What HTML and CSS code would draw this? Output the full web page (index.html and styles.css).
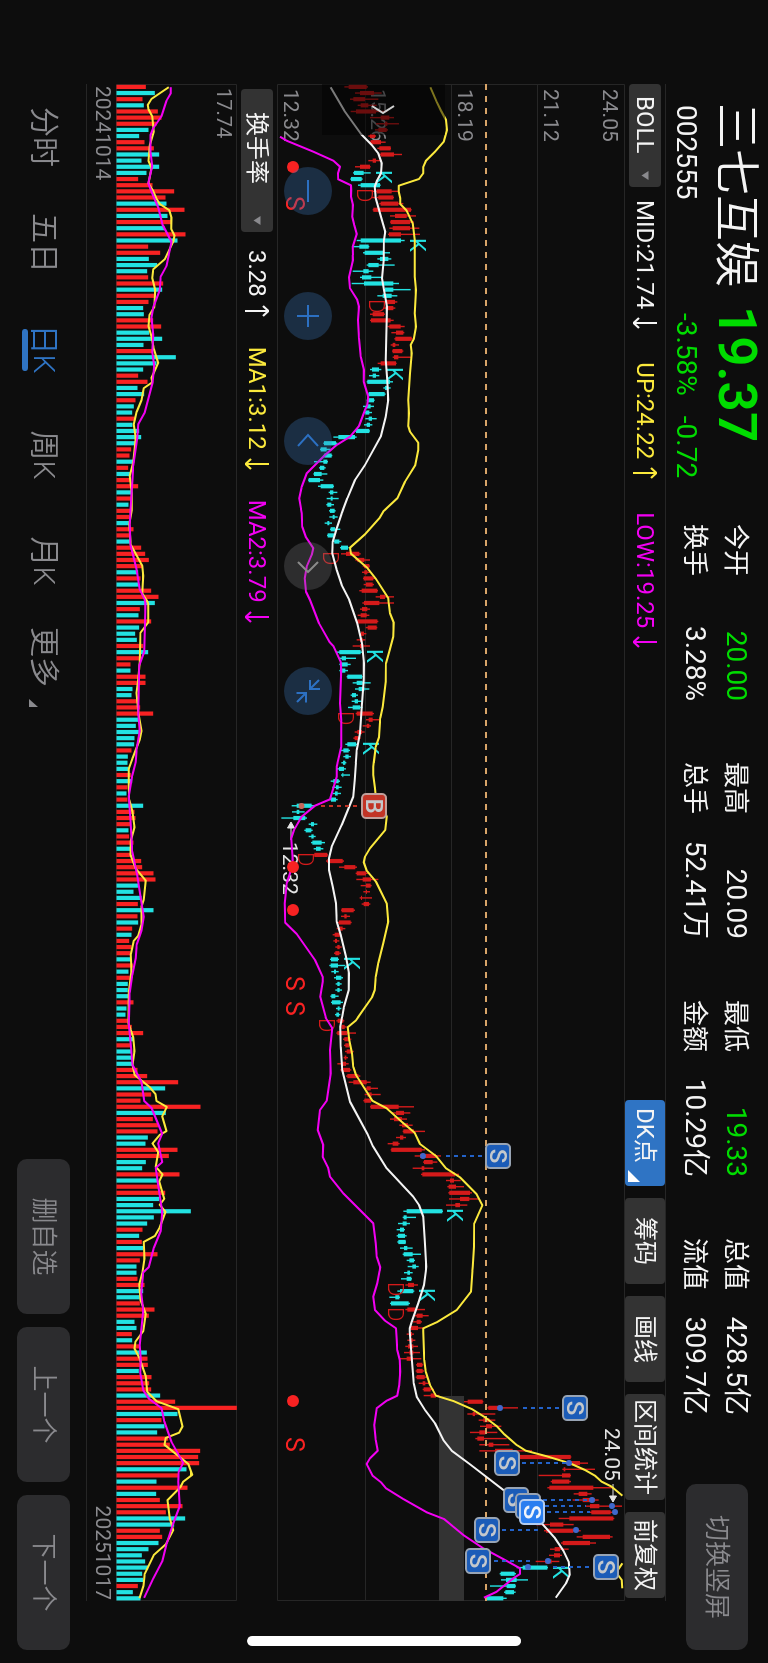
FILE: index.html
```html
<!DOCTYPE html>
<html lang="zh-CN">
<head>
<meta charset="utf-8">
<title>三七互娱 002555</title>
<link rel="stylesheet" href="styles.css">
</head>
<body>
<main class="screen">
  <header class="header">
    <div class="quote">
      <h1 class="name">三七互娱</h1>
      <strong class="price">19.37</strong>
      <span class="code">002555</span>
      <span class="change"><span>-3.58%</span><span>-0.72</span></span>
    </div>
    <dl class="stats">
      <div class="stat"><dt>今开</dt><dd class="down">20.00</dd></div>
      <div class="stat"><dt>最高</dt><dd>20.09</dd></div>
      <div class="stat"><dt>最低</dt><dd class="down">19.33</dd></div>
      <div class="stat"><dt>总值</dt><dd>428.5亿</dd></div>
      <div class="stat"><dt>换手</dt><dd>3.28%</dd></div>
      <div class="stat"><dt>总手</dt><dd>52.41万</dd></div>
      <div class="stat"><dt>金额</dt><dd>10.29亿</dd></div>
      <div class="stat"><dt>流值</dt><dd>309.7亿</dd></div>
    </dl>
    <button class="pill rotate" type="button">切换竖屏</button>
  </header>

  <section class="bar bar-main">
    <span class="picker">
      <select class="select" aria-label="主图指标"><option>BOLL</option></select>
      <svg class="caret" viewBox="0 0 10 8"><path d="M0 0h10L5 8z"/></svg>
    </span>
    <span class="reading">MID:21.74<svg class="arrow" viewBox="0 0 12 24"><path d="M6 0v23M1 18l5 5.500 5-5.500"/></svg></span>
    <span class="reading up">UP:24.22<svg class="arrow" viewBox="0 0 12 24"><path d="M6 24V1M1 6l5-5.500L11 6"/></svg></span>
    <span class="reading low">LOW:19.25<svg class="arrow" viewBox="0 0 12 24"><path d="M6 0v23M1 18l5 5.500 5-5.500"/></svg></span>
    <nav class="tools">
      <button class="tool tool-on" type="button">DK点<svg class="corner" viewBox="0 0 12 12"><path d="M12 0v12H0z"/></svg></button>
      <button class="tool" type="button">筹码</button>
      <button class="tool" type="button">画线</button>
      <button class="tool" type="button">区间统计</button>
      <button class="tool" type="button">前复权</button>
    </nav>
  </section>

  <section class="plot">
    <svg class="chart" id="price-chart" viewBox="0 0 1517 348" role="img" aria-label="日K线"></svg>
    <button class="drawer" type="button" aria-label="展开"><svg viewBox="0 0 12 26"><path d="M2 2l7 11-7 11"/></svg></button>
    <div class="knobs">
      <button class="knob" type="button" aria-label="缩小"><svg viewBox="0 0 48 48"><path d="M13 24h22"/></svg></button>
      <button class="knob" type="button" aria-label="放大"><svg viewBox="0 0 48 48"><path d="M13 24h22M24 13v22"/></svg></button>
      <button class="knob" type="button" aria-label="向左"><svg viewBox="0 0 48 48"><path d="M29 14L18 24l11 10"/></svg></button>
      <button class="knob knob-off" type="button" aria-label="向右"><svg viewBox="0 0 48 48"><path d="M20 14l10 10-10 10"/></svg></button>
      <button class="knob" type="button" aria-label="收起"><svg viewBox="0 0 48 48"><path d="M22 12v10H13M22 22l-9-9M26 35.500V26h9.500M26 26l9 9"/></svg></button>
    </div>
  </section>

  <section class="bar bar-volume">
    <span class="picker picker-wide">
      <select class="select" aria-label="副图指标"><option>换手率</option></select>
      <svg class="caret" viewBox="0 0 10 8"><path d="M0 0h10L5 8z"/></svg>
    </span>
    <span class="reading">3.28<svg class="arrow" viewBox="0 0 12 24"><path d="M6 24V1M1 6l5-5.500L11 6"/></svg></span>
    <span class="reading up">MA1:3.12<svg class="arrow" viewBox="0 0 12 24"><path d="M6 0v23M1 18l5 5.500 5-5.500"/></svg></span>
    <span class="reading low">MA2:3.79<svg class="arrow" viewBox="0 0 12 24"><path d="M6 0v23M1 18l5 5.500 5-5.500"/></svg></span>
  </section>

  <section class="plot">
    <svg class="chart" id="volume-chart" viewBox="0 0 1517 121" role="img" aria-label="换手率"></svg>
  </section>
  <div class="dates"><time>20241014</time><time>20251017</time></div>

  <footer class="footer">
    <nav class="tabs">
      <button class="tab" type="button">分时</button>
      <button class="tab" type="button">五日</button>
      <button class="tab tab-on" type="button">日K</button>
      <button class="tab" type="button">周K</button>
      <button class="tab" type="button">月K</button>
      <button class="tab" type="button">更多<svg class="more" viewBox="0 0 8 9"><path d="M8 0v9H0z"/></svg></button>
    </nav>
    <div class="actions">
      <button class="pill" type="button">删自选</button>
      <button class="pill" type="button">上一个</button>
      <button class="pill" type="button">下一个</button>
    </div>
  </footer>
  <div class="home"></div>
</main>
<script src="charts.js"></script>
</body>
</html>
```
FILE: styles.css
```css
* { box-sizing: border-box; }

body {
  margin: 0;
  height: 100vh;
  overflow: hidden;
  background: #0d0d0d;
  color: #f4f4f4;
  font-family: Roboto, "Noto Sans CJK SC", sans-serif;
}

/* The terminal is a landscape screen turned clockwise. */
.screen {
  position: fixed;
  top: 0;
  left: 0;
  width: 100vh;
  height: 100vw;
  overflow: hidden;
  display: flex;
  flex-direction: column;
  transform-origin: 0 0;
  transform: translateX(100vw) rotate(90deg);
}

button, select { font: inherit; color: inherit; border: 0; margin: 0; padding: 0; background: none; }
svg { display: block; }

.header { display: flex; height: 102px; padding: 0 13px 0 103px; }
.quote {
  display: grid;
  grid-template-columns: 203px 218px;
  grid-template-rows: 62px 40px;
  align-items: center;
  line-height: 1;
}
.name { margin: 0; font-size: 46px; font-weight: 350; }
.price { font-size: 53px; font-weight: 600; color: #00dc00; }
.code { font-size: 28px; padding-left: 2px; }
.change { display: flex; gap: 20px; font-size: 28px; color: #00dc00; padding-left: 7px; }
.stats {
  flex: 1;
  display: grid;
  grid-template-columns: repeat(4, 1fr);
  grid-auto-rows: 41px;
  column-gap: 61px;
  margin: 11px 69px 0 0;
  font-size: 26px;
}
.stat { display: flex; justify-content: space-between; align-items: center; line-height: 1; }
.stat dd { margin: 0; font-size: 28px; }
.down { color: #00dc00; }

.pill {
  height: 53px;
  width: 155px;
  border-radius: 10px;
  background: #2c2c2e;
  color: #8a8a8e;
  font-size: 26px;
  font-weight: 350;
  line-height: 1;
}
.rotate { width: 166px; height: 62px; margin-top: 20px; }

.bar {
  display: flex;
  align-items: center;
  gap: 33px;
  margin: 0 62px 0 84px;
  font-size: 24px;
  line-height: 1;
}
.bar-main { height: 41px; border-top: 1px solid #262626; }
.bar-volume { height: 40px; gap: 30px; }
.picker {
  display: grid;
  align-items: center;
  width: 103px;
  height: 32px;
  margin-right: -20px;
  border-radius: 4px;
  background: #333;
}
.select {
  grid-area: 1 / 1;
  appearance: none;
  width: 100%;
  height: 100%;
  padding-left: 12px;
}
.caret { grid-area: 1 / 1; justify-self: end; width: 9px; height: 8px; margin-right: 7px; fill: #8a8a8e; }
.picker-wide { width: 143px; margin-left: 5px; margin-right: -12px; }
.picker-wide .select { padding-left: 23px; }
.reading { display: flex; align-items: center; gap: 8px; }
.arrow { width: 12px; height: 24px; fill: none; stroke: currentColor; stroke-width: 2; }
.up { color: #fbe93c; }
.low { color: #f200f2; }
.tools { display: flex; gap: 12px; align-self: stretch; margin-left: auto; margin-right: 3px; }
.tool { position: relative; min-width: 86px; padding: 0 5px; border-radius: 4px; background: #333; }
.tool-on { padding-right: 20px; background: #2f74c4; }
.corner { position: absolute; right: 4px; bottom: 3px; width: 12px; height: 12px; fill: #fff; }

.plot { position: relative; margin: 0 62px 0 84px; }
.chart { width: 100%; height: auto; }
.drawer {
  position: absolute;
  left: 0;
  top: 180px;
  width: 51px;
  height: 123px;
  display: grid;
  place-items: center;
  background: rgba(0, 0, 0, .5);
}
.drawer svg { width: 12px; height: 26px; fill: none; stroke: #d0d0d0; stroke-width: 2; }
.knobs { position: absolute; left: 83px; bottom: 7px; display: flex; gap: 77px; }
.knob { width: 48px; height: 48px; border-radius: 50%; background: rgba(56, 120, 190, .3); color: #2c70c2; }
.knob svg { fill: none; stroke: currentColor; stroke-width: 2; }
.knob-off { background: rgba(115, 115, 120, .3); color: #8a8a8a; }

.dates {
  display: flex;
  justify-content: space-between;
  height: 30px;
  margin: 0 62px 0 84px;
  padding: 0 1px 0 2px;
  border-bottom: 1px solid #262626;
  font-size: 21px;
  line-height: 27px;
  color: #8a8a8e;
}

.footer {
  flex: 1;
  display: flex;
  align-items: center;
  justify-content: space-between;
  padding: 0 13px 2px 84px;
}
.tabs { display: grid; grid-template-columns: repeat(6, 106px); }
.tab {
  position: relative;
  display: flex;
  justify-content: center;
  align-items: end;
  gap: 12px;
  font-size: 30px;
  font-weight: 350;
  line-height: 36px;
  color: #8a8a8e;
}
.tab-on { color: #2f74c4; }
.tab-on::after {
  content: "";
  position: absolute;
  left: 33px;
  bottom: -4px;
  width: 42px;
  height: 6px;
  border-radius: 3px;
  background: #2f74c4;
}
.more { width: 8px; height: 9px; margin-bottom: 3px; fill: #8a8a8e; }
.actions { display: flex; gap: 13px; }

.home {
  position: absolute;
  right: 17px;
  top: 247px;
  width: 10px;
  height: 274px;
  border-radius: 5px;
  background: #fff;
}

.grid { stroke: #262626; fill: none; }
.axis { fill: #8a8a8e; font-size: 21px; }
.axis-small { font-size: 20px; }
.zone { fill: #333; }
.rise { fill: #d41a1a; }
.fall { fill: #22e2e2; }
.vol-rise { fill: #f82222; }
.vol-fall { fill: #22e2e2; }
.line { fill: none; stroke-width: 2; stroke-linejoin: round; }
.line-mid { stroke: #f4f4f4; }
.line-up { stroke: #fbe93c; }
.line-low { stroke: #f200f2; }
.last { stroke: #d8a468; stroke-width: 2; stroke-dasharray: 6 6; }
.mark { font-size: 22px; font-weight: 350; }
.mark-k { font-weight: 400; }
.signal { fill: #f82222; font-size: 25px; }
.note { fill: #e4e4e4; font-size: 21px; }
.note-arrow { stroke: #e4e4e4; fill: #e4e4e4; stroke-width: 1; }
.stem { stroke-width: 2; stroke-dasharray: 4 4; }
.badge text { font-size: 24px; font-weight: 500; text-anchor: middle; fill: #c4c8cc; }
.badge rect { stroke-width: 2; }
.badge-s rect { fill: #1b5cb8; stroke: #98a4b4; }
.badge-top rect { fill: #2a7ef0; stroke: #b4cdf0; }
.badge-top text { fill: #f0f4fa; }
.badge-b rect { fill: #c23426; stroke: #c0a09c; }
.stem-s { stroke: #2362c8; }
.stem-b { stroke: #c23426; }
.dot-s { fill: #3f68cc; }
.dot-b { fill: #c8685c; }
```
FILE: charts.js
```js
const NS = 'http://www.w3.org/2000/svg';
const STEP = 6.144;
const FIRST = 2.9;
const LEFT = 84;

function add(parent, tag, attrs, text) {
  const el = document.createElementNS(NS, tag);
  for (const key in attrs) el.setAttribute(key, attrs[key]);
  if (text) el.textContent = text;
  parent.appendChild(el);
  return el;
}

// Splits "a,b a,b" into pairs of numbers.
const rows = s => s.trim().split(/\s+/).map(r => r.split(','));

// Joins line segments: [start, units per pixel, level shift, points].
function trace(parent, cls, segments, toY) {
  let last = -1, d = '';
  for (const [start, unit, shift, pts] of segments) {
    for (const [v, t] of rows(pts)) {
      const x = start + t / unit - LEFT;
      if (x <= last) continue;
      last = x;
      d += (d ? 'L' : 'M') + x.toFixed(1) + ' ' + toY(+v + shift).toFixed(1);
    }
  }
  add(parent, 'path', { class: 'line ' + cls, d });
}

/* ---------- price chart ---------- */
const price = document.getElementById('price-chart');
const level = v => 355 - v / 3;

// colour, low, body low, body high, high
const candles = rows(`
r,223,236,290,294 r,255,270,312,335 r,240,250,285,325 r,263,272,295,320 r,242,258,318,352 r,300,332,358,372
r,318,345,352,387 r,315,325,350,354 r,295,300,315,318 r,297,302,333,347 r,322,328,362,363 r,328,332,372,396
r,295,308,318,336 r,255,270,300,302 c,249,252,281,302 c,241,243,275,278 c,264,272,330,332 r,305,320,365,384
r,303,325,370,372 r,328,332,385,400 r,308,310,423,425 r,360,375,410,438 r,360,362,420,432 r,358,368,420,448
r,354,357,393,450 c,260,272,393,404 c,248,268,296,298 c,279,284,340,360 c,322,330,355,364 c,290,295,326,374
c,248,280,296,310 c,270,276,304,336 c,245,282,370,387 c,340,345,370,422 c,322,338,365,382 r,345,350,375,382
r,340,348,370,376 r,300,308,342,345 r,300,303,362,371 r,352,358,392,404 r,364,378,400,403 r,373,376,425,428
r,362,368,376,387 r,366,368,397,400 r,368,372,385,425 r,323,332,378,380 c,300,306,327,334 c,297,308,318,328
c,290,292,360,369 c,340,345,355,362 c,293,296,344,347 c,290,293,312,314 c,279,290,302,312 c,283,286,298,306
c,286,296,306,320 c,282,290,300,307 c,255,258,298,300 c,190,205,255,260 c,160,162,198,202 c,150,152,170,182
c,160,163,185,187 c,132,160,172,174 c,147,150,163,167 c,130,132,155,172 c,114,116,150,160 c,144,152,190,192
c,176,180,190,202 c,170,182,188,206 c,169,172,184,192 c,177,180,194,197 c,178,188,194,203 c,164,172,178,186
c,180,182,195,211 c,171,173,192,194 c,190,193,208,214 c,210,213,234,236 r,213,228,268,272 r,256,262,283,300
r,278,282,298,300 r,276,283,292,300 r,279,281,310,316 r,281,288,308,312 r,268,275,322,324 r,317,330,345,372
r,277,282,328,372 r,270,276,292,300 r,263,272,290,298 r,258,262,322,325 r,287,293,320,322 r,268,273,282,289
r,260,270,278,286 r,248,270,280,300 c,201,208,272,276 c,206,215,228,258 c,208,213,233,242 c,208,216,226,234
c,230,232,276,278 c,248,260,278,302 c,255,266,283,298 c,242,246,258,264 c,245,254,264,278 c,234,248,270,278
r,257,260,308,312 r,288,296,308,328 r,278,290,298,303 r,254,262,276,284 r,250,254,266,272 c,226,232,258,264
c,210,220,236,240 c,220,226,236,243 c,214,219,226,229 c,200,207,222,228 c,213,217,220,240 c,182,190,206,210
c,187,198,206,215 c,188,195,203,213 c,178,183,198,203 c,65,80,125,133 c,66,80,88,104 c,34,70,106,111
c,116,123,132,142 c,103,107,124,128 c,116,124,131,137 c,123,127,155,165 c,131,138,152,160 r,130,133,172,174
r,168,172,218,222 r,207,223,256,261 r,257,260,288,296 r,259,278,303,325 r,272,288,302,305 r,280,288,291,300
r,269,273,276,306 r,275,281,297,301 r,213,215,251,255 r,213,223,230,240 r,204,207,242,245 r,200,208,218,226
r,188,194,210,214 r,190,195,201,208 r,196,202,209,215 r,192,196,208,213 c,180,183,204,207 c,178,182,204,226
c,184,192,198,206 c,192,198,214,219 c,197,202,209,215 c,196,202,209,216 c,181,184,196,206 c,183,186,212,219
c,198,203,209,214 c,195,199,207,211 r,199,203,220,223 r,210,215,224,230 r,199,202,232,258 r,219,223,240,244
r,222,226,238,243 r,225,230,246,251 r,221,224,229,234 r,202,213,228,236 r,211,215,240,244 r,228,232,265,271
r,236,250,290,302 r,284,290,302,324 r,284,292,305,332 r,280,283,303,305 r,300,302,386,432 r,366,378,402,421
r,360,372,396,411 r,388,396,414,428 r,398,400,432,465 r,378,390,400,408 r,353,368,385,389 r,362,364,455,465
r,434,450,498,513 r,459,462,488,502 r,428,455,463,490 r,453,457,555,567 r,528,540,552,572 r,532,536,558,582
r,535,538,600,606 r,537,570,598,626 r,528,556,570,592 c,400,410,517,519 c,398,401,410,438 c,384,398,410,420
c,380,390,402,405 c,380,384,405,410 c,382,385,407,408 c,390,402,412,428 c,398,401,428,453 c,410,418,432,435
c,413,427,438,446 c,402,412,420,428 c,393,410,424,426 r,406,414,432,444 c,382,390,430,433 c,358,376,388,390
c,360,363,416,420 r,406,412,436,465 r,432,440,458,476 r,428,440,452,456 r,418,422,444,460 r,410,418,426,432
r,412,420,428,436 r,406,414,430,444 r,402,418,430,450 r,388,410,428,454 r,438,441,457,460 r,437,440,458,462
r,437,440,464,473 r,446,458,466,480 r,458,461,482,492 r,461,482,498,508 r,582,593,638,640 r,652,655,695,744
r,592,608,615,676 r,626,640,658,676 r,630,648,666,694 r,600,628,646,682 r,616,622,642,710 r,628,656,670,718
r,628,675,728,786 r,738,743,902,904 r,888,892,930,954 r,877,881,886,975 r,806,876,901,903 r,842,846,898,903
r,832,838,970,1030 r,911,926,952,965 r,908,938,974,986 r,945,960,988,1056 r,960,964,1022,1028 r,866,898,1030,1033
r,798,840,880,911 r,822,828,910,932 r,920,938,1020,1028 r,873,878,960,978 r,840,854,870,896 r,837,852,870,876
r,797,826,845,868 c,740,758,832,834 c,689,692,734,738 c,693,708,740,774 c,660,710,736,738 c,702,706,732,737
c,646,650,700,710`);

const upper = [
  [80, 3, 0, `481,22 500,65 513,92 528,120 531,150 521,185 495,215 468,242 460,260 460,280 447,297 386,317 386,335 391,355 391,372 410,392 428,430 434,480 434,590 438,630 434,700 438,740 431,778`],
  [340, 3, 0, `422,15 425,40 420,100 415,180 417,220 415,258 420,275 445,308 445,330 436,375 405,425 382,475 341,513 328,535 285,583 240,623 243,641 290,682 318,717 355,775`],
  [600, 3, 0, `356,10 360,40 371,68 370,110 358,155 348,190 347,245 338,320 331,355 327,412 317,440 310,500 310,525 315,565 318,598 340,625 350,650 346,690`],
  [800, 3, 0, `300,145 285,170 281,187 290,212 318,245 350,310 355,365 340,430 325,490 317,530 314,570 306,592 257,662 233,682 238,720 246,760 250,800 258,825`],
  [1080, 3, 0, `307,62 350,85 395,125 434,158 450,192 498,228 528,265 570,292 620,343 637,376 613,430 612,500 608,560 603,635 560,690 500,727 460,745`],
  [1330, 3, 270, `190,5 193,90 197,125 210,165 228,197 280,213 335,237 375,262 412,290 432,312 470,345 497,362 560,379 630,400 675,420 705,437 725,455 755,470 787,497`]
];
const upperTail = [[1330, 3, 270, `787,700 775,718 774,735 785,750 787,775`]];
const middle = [
  [80, 3, 0, `182,22 223,92 273,162 305,195 325,220 335,250 333,280 322,300 314,320 317,355 330,400 346,455 342,480 341,540 336,595 342,630 351,680 349,775`],
  [340, 3, 0, `347,60 352,120 355,180 347,230 332,290 285,375 255,420 232,475 215,520 200,565 188,605 187,640 200,690 215,735 238,780`],
  [600, 3, 0, `262,70 276,130 282,190 281,240 275,320 270,400 260,450 254,540 250,590`],
  [800, 3, 0, `215,75 185,140 177,175 177,210 188,260 198,310 200,365 212,405 228,470 237,520 236,570 222,620 211,680 212,740 217,810`],
  [1080, 3, 0, `240,65 293,163 308,197 350,265 430,350 447,375 460,410 464,480 469,560 462,615 445,670 425,725 419,745`],
  [1330, 3, 270, `149,5 155,85 161,160 170,200 195,240 225,280 250,330 275,362 330,403 430,480 490,518 550,585 583,622 610,662 626,695 629,735 618,760 587,803`]
];
const lower = [
  [80, 3, 0, `30,170 50,182 130,215 190,242 210,260 204,280 205,298 243,316 244,330 243,350 249,375 247,410 253,435 260,462 248,500 249,540 237,592 240,625 262,660 267,680 264,720 267,775`],
  [340, 3, 0, `272,50 282,90 281,125 295,170 292,195 285,210 267,258 240,290 200,315 165,345 110,400 95,440 88,475 95,520 97,560 107,590 130,625 125,645 110,680 104,715 108,755 120,780`],
  [600, 3, 0, `147,70 178,125 190,138 212,185 214,210 210,310 214,360 214,440 200,500 200,530 180,598`],
  [800, 3, 0, `135,17 95,50 72,90 64,115 68,180 60,220 50,250 44,310 46,368 80,402 135,480 158,530 158,545 151,590 168,655 187,685 180,750 182,820`],
  [1080, 3, 0, `170,62 150,90 143,150 160,195 158,230 175,265 180,290 220,340 310,430 317,490 320,530 331,562 322,610 310,650 315,690 345,722 378,745`],
  [1330, 3, 270, `110,30 112,60 119,90 121,125 118,165 112,197 80,212 50,235 43,285 47,330 53,362 30,385 20,402 38,437 63,457 78,475 130,507 200,547 252,567 310,615 370,655 435,690 480,715 480,732 460,745 410,785 372,803`]
];

add(price, 'path', { class: 'grid', d: 'M.5 .5H1516.500V347.500H.5zM0 87.500H1517M0 173.500H1517M0 259.500H1517' });
[['24.05', 22], ['21.12', 81], ['18.19', 167], ['15.26', 254], ['12.32', 341]]
  .forEach(([t, y]) => add(price, 'text', { class: 'axis', x: 5, y }, t));
add(price, 'rect', { class: 'zone', x: 1312, y: 161, width: 205, height: 25 });

candles.forEach(([c, lo, b0, b1, hi], i) => {
  const x = FIRST + i * STEP;
  const cls = c === 'r' ? 'rise' : 'fall';
  add(price, 'rect', { class: cls, x: x - .7, y: level(hi), width: 1.4, height: (hi - lo) / 3 });
  add(price, 'rect', { class: cls, x: x - 2.1, y: level(b1), width: 4.2, height: (b1 - b0) / 3 });
});
add(price, 'path', { class: 'last', d: 'M0 139H1517' });

[[172, 376], [240, 410], [369, 387], [651, 367], [743, 363], [958, 344], [1210, 447], [1290, 419], [1567, 553]]
  .forEach(([t, v]) => add(price, 'text', { class: 'mark mark-k fall', x: t - LEFT - 2, y: 625 - v }, 'K'));
[[190, 357], [301, 369], [553, 323], [713, 338], [854, 298], [1020, 319], [1284, 388], [1309, 388]]
  .forEach(([t, v]) => add(price, 'text', { class: 'mark rise', x: t - LEFT - 2, y: 625 - v }, 'D'));

add(price, 'text', { class: 'note', x: 1344, y: 20 }, '24.05');
add(price, 'path', { class: 'note-arrow', d: 'M1400 12H1416M1412 8.500l6 3.500-6 3.500z' });
add(price, 'text', { class: 'note', x: 758, y: 342 }, '12.32');
add(price, 'path', { class: 'note-arrow', d: 'M756 334H740M744 330.500l-6 3.500 6 3.500z' });

trace(price, 'line-up', upper, level);
trace(price, 'line-up', upperTail, level);
trace(price, 'line-mid', middle, level);
trace(price, 'line-low', lower, level);

[167, 867, 910, 1401].forEach(t => add(price, 'circle', { class: 'signal', cx: t - LEFT, cy: 332, r: 6 }));
[196, 976, 1001, 1437].forEach(t => add(price, 'text', { class: 'signal', x: t - LEFT, y: 339 }, 'S'));

// letter, time, badge level, stem from, stem to, dot level
[['B', 806, 374, 321, 362, 301.5], ['S', 1156, 498, 446, 486, 423], ['S', 1408, 575, 523, 563, 500],
 ['S', 1463, 507, 522, 566, 569], ['S', 1500, 516, 543, 589, 592], ['S', 1506, 528, 545, 586, 612],
 ['top', 1512, 532, 547, 590, 615], ['S', 1530, 487, 502, 541, 576], ['S', 1561, 478, 494, 531, 548],
 ['S', 1567, 606, 553, 592, 528]].forEach(([k, t, v, a, b, dot]) => {
  const kind = k === 'B' ? 'b' : 's';
  const x = t - LEFT;
  const y = 625 - v;
  add(price, 'path', { class: 'stem stem-' + kind, d: `M${x} ${625 - a}V${625 - b}` });
  add(price, 'circle', { class: 'dot-' + kind, cx: x, cy: 625 - dot, r: 3 });
  const g = add(price, 'g', { class: 'badge badge-' + (k === 'top' ? 'top' : kind) });
  add(g, 'rect', { x: x - 12, y: y - 12, width: 24, height: 24, rx: 4 });
  add(g, 'text', { x, y: y + 8 }, k === 'B' ? 'B' : 'S');
});

/* ---------- turnover chart ---------- */
const volume = document.getElementById('volume-chart');
const height = v => (v - 350) / 3;
const volLevel = v => 120.5 - height(v);

const bars = `
r438 c465 r428 c432 r474 r485 r470 c446 c418 r434 r462 c478 c425 c478 c440 r415 r458 r523 r497 c500 r554 c503 r513 c494 r557
c533 r445 r481 c447 c472 c442 r445 r490 c487 r465 r446 c430 c432 r460 r484 c448 c487 c431 r460 c528 c470 c430 r415 r443 c413
c433 r407 c402 c397 r405 c398 c418 c424 c407 r394 r389 c400 r385 c392 r392 r415 c395 r393 c386 r392 r388 c387 r401 r390 c390
r424 r436 r447 r428 c415 r422 c417 r454 r476 c465 r420 c416 r454 c418 c406 c411 r430 c445 r422 r392 c392 r437 r437 c398 c395
r412 r421 r460 c416 c408 c417 c404 c403 r395 c384 c383 c385 r393 c397 r383 c380 r383 c430 r404 r407 r393 c386 r388 r401 c392
r392 r424 r427 r461 r467 c415 c401 c425 r414 c461 r413 c415 r397 c395 r388 r395 r392 c393 r399 c386 r390 c384 c384 c386 r401
c380 c377 r384 r396 r430 c400 r393 c394 c397 c400 r413 r442 r535 c496 r454 r422 r602 c498 r459 r475 r473 c444 c437 r533 r507
c438 c427 r539 c475 r480 r496 c478 c460 c573 c462 c442 r428 c418 r426 c430 r473 r420 c410 c410 r413 r434 c430 c420 r420 r464
r447 c404 c410 r396 c397 r418 c441 r443 r444 c417 r455 r448 r454 c481 r526 r711 c533 r485 c494 c472 r505 r510 r601 r595 r598
c560 r535 c470 r563 c469 r480 r548 r498 c556 c523 r480 r487 c476 c446 c426 c436 c445 c427 c430 r414 c399 c422`.trim().split(/\s+/);

add(volume, 'path', { class: 'grid', d: 'M.5 .5H1516.500V120.500H.5z' });
add(volume, 'text', { class: 'axis axis-small', x: 4, y: 20 }, '17.74');
bars.forEach((bar, i) => {
  const v = +bar.slice(1);
  add(volume, 'rect', {
    class: bar[0] === 'r' ? 'vol-rise' : 'vol-fall',
    x: FIRST + i * STEP - 2.1, y: volLevel(v), width: 4.2, height: height(v)
  });
});

const ma1 = [
  [80, 2.904, 0, `507,21 455,55 444,72 446,85 457,105 462,150 450,190 446,235 455,255 446,300 460,322 470,345 480,360 508,378 515,400 514,432 524,452 520,470 495,520 460,550 457,575 466,610 463,660 449,682 446,715 455,745 462,780 475,822 455,865 457,878 432,895 425,930 410,965 402,1000 408,1040 400,1110 390,1150 396,1200 396,1250 388,1290 393,1350 427,1410 430,1440 427,1490 440,1510`],
  [600, 2.904, 0, `445,10 445,65 422,95 420,180 415,230 410,270 416,330 425,380 420,405 398,460 387,490 387,540 388,580 398,615 404,660 393,700 392,740 408,780 438,815 432,870 425,890 426,940 415,975 402,990 393,1030 395,1075 387,1140 386,1230 400,1270 404,1310 398,1350 405,1380 450,1415 467,1435 470,1455 501,1472 487,1500`],
  [1120, 2.888, 0, `500,32 480,43 458,68 475,92 468,135 488,157 478,178 493,228 480,245 497,265 480,310 465,335 432,352 434,400 428,440 418,475 422,520 438,560 430,610 407,640 404,660 420,690 438,740 442,785 470,812 535,835 548,885 538,903 498,918 494,938 565,993 577,1025 550,1045 542,1060 503,1098 510,1150 520,1185 498,1225 462,1256 435,1310 431,1345 419,1381`]
];
const ma2 = [
  [80, 2.904, 0, `513,21 513,38 500,60 485,105 460,140 452,160 452,210 457,250 445,300 462,340 475,370 488,420 515,470 500,540 483,570 480,610 460,660 455,690 460,740 457,790 463,830 458,880 450,910 435,965 415,1000 412,1040 400,1120 398,1160 392,1250 390,1290 392,1350 410,1420 420,1480 435,1510`],
  [600, 2.904, 0, `437,10 433,150 418,190 415,330 420,380 411,430 408,470 397,510 387,570 392,640 397,730 412,800 425,880 432,920 425,960 411,1000 408,1040 397,1090 390,1140 387,1230 393,1290 398,1350 425,1400 433,1455 455,1475`],
  [1120, 2.888, 0, `470,0 487,40 475,68 487,122 468,138 475,190 487,265 483,320 462,370 447,425 430,440 424,500 430,550 420,650 423,690 421,730 430,780 447,805 485,832 493,870 515,930 550,990 537,1015 535,1045 540,1115 520,1165 500,1225 487,1275 460,1325 433,1380`]
];
trace(volume, 'line-up', ma1, volLevel);
trace(volume, 'line-low', ma2, volLevel);
```
